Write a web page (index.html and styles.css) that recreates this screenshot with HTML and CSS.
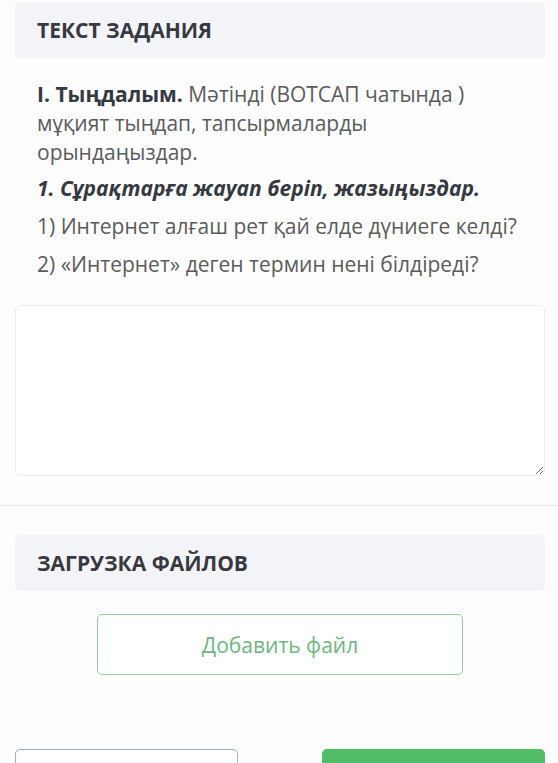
FILE: index.html
```html
<!DOCTYPE html>
<html lang="ru">
<head>
    <meta charset="UTF-8">
    <meta name="viewport" content="width=device-width, initial-scale=1.0">
    <title>Текст задания</title>
    <link rel="stylesheet" href="styles.css">
</head>
<body>
    <div class="page">
        <div class="section-head">ТЕКСТ ЗАДАНИЯ</div>
        <div class="task">
            <p class="intro"><b>I. Тыңдалым.</b> Мәтінді (ВОТСАП чатында ) мұқият тыңдап, тапсырмаларды орындаңыздар.</p>
            <p class="sub"><b><i>1. Сұрақтарға жауап беріп, жазыңыздар.</i></b></p>
            <p class="q">1) Интернет алғаш рет қай елде дүниеге келді?</p>
            <p class="q">2) «Интернет» деген термин нені білдіреді?</p>
        </div>
        <textarea class="answer"></textarea>
    </div>
    <hr class="divider">
    <div class="page">
        <div class="section-head">ЗАГРУЗКА ФАЙЛОВ</div>
        <div class="upload">
            <button class="add-file">Добавить файл</button>
        </div>
        <div class="actions">
            <button class="btn-back"></button>
            <button class="btn-send"></button>
        </div>
    </div>
</body>
</html>
```

FILE: styles.css
```css
body {
    margin: 0;
    padding: 2px 0 0;
    font-family: 'Open Sans', 'Noto Sans', sans-serif;
    background: #fdfdfd;
    color: #5b5b5b;
}
.page {
    padding: 0 13px 0 15px;
}
.section-head {
    background: #f3f4f8;
    border-radius: 5px;
    height: 56px;
    padding: 0 22px;
    display: flex;
    align-items: center;
    font-size: 21px;
    font-weight: 700;
    color: #363940;
}
.task {
    padding: 22px 22px 0;
    font-size: 21px;
    line-height: 29px;
}
.task p {
    margin: 0 0 9px;
}
.task .intro {
    margin-bottom: 7px;
}
.task b {
    color: #363940;
}
.answer {
    display: block;
    box-sizing: border-box;
    width: 100%;
    height: 171px;
    margin: 26px 0 0;
    border: 1px solid #ececec;
    border-radius: 5px;
    background: #fff;
    resize: vertical;
}
.divider {
    border: none;
    border-top: 1px solid #e6e6e6;
    margin: 29px 0 29px;
}
.upload {
    display: flex;
    justify-content: center;
    padding-top: 23px;
}
.add-file {
    width: 366px;
    height: 61px;
    background: #fff;
    border: 1px solid #94cfa2;
    border-radius: 5px;
    font-family: inherit;
    font-size: 21px;
    color: #6db77f;
}
.actions {
    display: flex;
    justify-content: space-between;
    padding-top: 74px;
}
.actions button {
    width: 223px;
    height: 50px;
    border-radius: 5px;
}
.btn-back {
    background: #fff;
    border: 1px solid #9bb4b6;
}
.btn-send {
    background: #52bd68;
    border: none;
}
```
